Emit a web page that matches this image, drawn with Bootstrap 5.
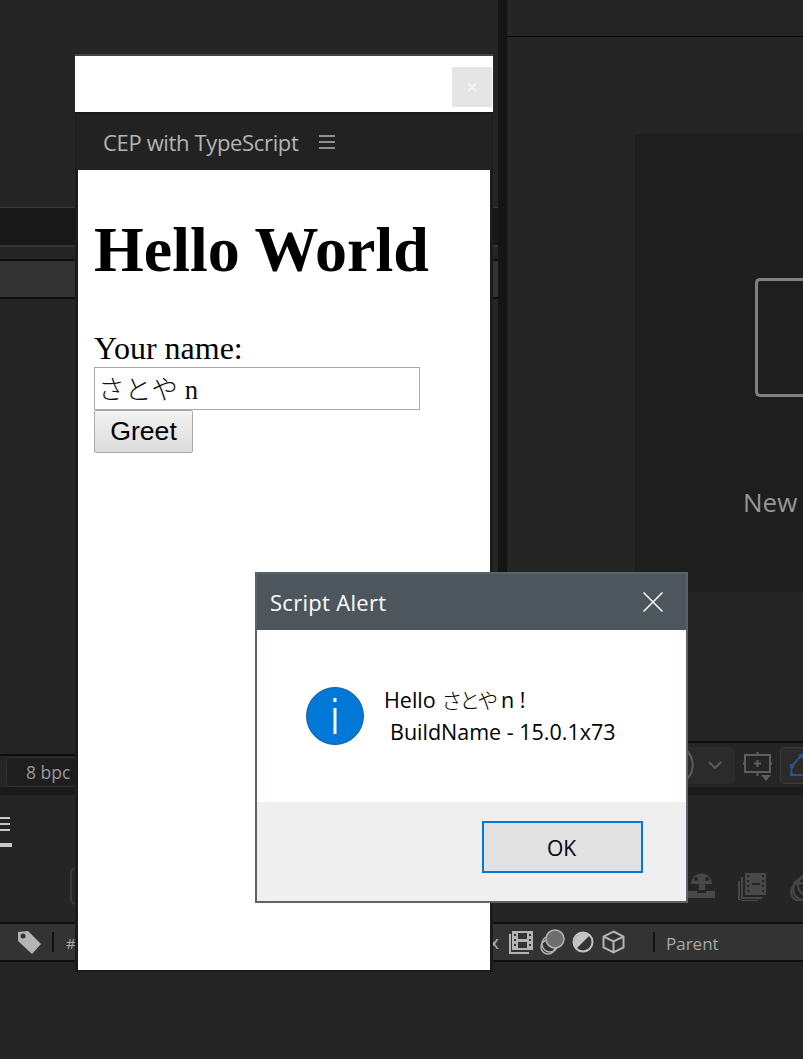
<!DOCTYPE html>
<html lang="en">
<head>
    <meta charset="UTF-8">
    <meta name="viewport" content="width=device-width, initial-scale=1.0">
    <title>CEP with TypeScript</title>
    <link href="https://cdn.jsdelivr.net/npm/bootstrap@5.3.0/dist/css/bootstrap.min.css" rel="stylesheet">
    <style>
        html, body { background: #252525; }
        .app-shell { width: 803px; height: 1059px; overflow: hidden; background: #252525; font-family: "Open Sans", "Noto Sans", sans-serif; }

        /* after effects behind the windows */
        .upper-area { height: 787px; }
        .left-dock { flex: 0 0 498px; padding-top: 207px; }
        .dock-tabs { height: 40px; background: #181818; border-top: 1px solid #3a3a3a; border-bottom: 2px solid #333; }
        .dock-strip { height: 40px; margin-top: 12px; background: #333; border-top: 2px solid #0e0e0e; border-bottom: 2px solid #0e0e0e; }
        .dock-split { flex: 0 0 9px; background: #141414; }
        .right-dock { flex: 0 0 296px; }
        .right-head { height: 37px; border-bottom: 1px solid #050505; }
        .comp-panel { height: 458px; margin: 97px 0 0 128px; background: #1e1e1e; padding: 144px 0 0 120px; }
        .comp-box { width: 80px; height: 119px; border: 3px solid #808080; border-right: 0; border-radius: 5px 0 0 5px; }
        .comp-label { margin: 87px 0 0 -12px; font-size: 26px; line-height: 36px; color: #959595; }

        .bpc-row { height: 33px; border-top: 2px solid #0e0e0e; color: #999; }
        .bpc-btn { flex: 0 0 72px; height: 30px; margin-left: 6px; padding-left: 19px; background: #1e1e1e; border: 1px solid #333; border-radius: 5px; font-size: 17.500px; line-height: 28px; white-space: nowrap; }
        .view-row { height: 46px; border-top: 2px solid #0e0e0e; }
        .view-btn { flex: 0 0 95px; height: 37px; margin-left: 133px; background: #2b2b2b; border-radius: 5px; padding-left: 46px; gap: 14px; }
        .crop-ico { margin: 3px 0 0 8px; }
        .mask-btn { flex: 0 0 30px; height: 37px; margin-left: 8px; padding-left: 9px; background: #2b2b2b; border: 1px solid #3c3c3c; border-radius: 5px 0 0 5px; }
        .tool-gap { height: 8px; background: #1a1a1a; }

        .tool-body { height: 127px; }
        .ham-ico { margin-top: 22px; }
        .find-btn { width: 40px; height: 38px; margin: 72px 0 0 58px; border: 2px solid #3a3a3a; border-radius: 6px; }
        .dim-ico { margin-top: 78px; }
        .dim-first { margin-left: 578px; }
        .dim-second { margin-left: 23px; }
        .dim-third { margin-left: 23px; }

        .layer-head { height: 40px; background: #333; border-top: 2px solid #0e0e0e; border-bottom: 2px solid #0e0e0e; color: #b4b4b4; }
        .tag-ico { margin-left: 17px; }
        .head-sep { width: 2px; height: 20px; background: #111; }
        .sep-a { margin-left: 10px; }
        .hash-label { margin: 3px 0 0 12px; font-size: 15px; width: 12px; color: #aaa; }
        .sw-x { margin: 0 0 0 411px; font-size: 19px; line-height: 20px; width: 14px; }
        .sw-ico { margin-left: 6px; }
        .sw-half { margin-left: 7px; }
        .sw-cube { margin-left: 8px; }
        .sep-b { margin-left: 28px; }
        .parent-label { margin: 4px 0 0 11px; font-size: 17px; color: #a8a8a8; }

        /* cep panel window */
        .cep-window { position: absolute; left: 75px; top: 54px; width: 418px; height: 918px; border-top: 2px solid #444; background: #1c1c1c; }
        .cep-title { height: 56px; background: #fff; padding: 11px 1px 0 0; }
        .cep-close { width: 40px; height: 40px; padding: 0; border: 0; background: #e5e5e5; color: #f6f6f6; font-size: 20px; line-height: 40px; font-family: "Liberation Sans", sans-serif; }
        .cep-nav { height: 58px; margin: 0 1px; padding: 0 0 0 27px; background: #222; border-top: 2px solid #1a1a1a; justify-content: flex-start; flex-wrap: nowrap; }
        .cep-brand { padding: 0; margin: 0 21px 0 0; font-size: 22px; line-height: 30px; color: #b4b4b4; font-family: "Open Sans", sans-serif; letter-spacing: -.35px; }
        .cep-brand:hover { color: #b4b4b4; }
        .cep-page { height: 800px; margin: 0 3px; background: #fff; padding: 0 16px; color: #000; font-family: "Liberation Serif", "Noto Sans CJK JP", serif; font-size: 32px; line-height: 37px; }
        .cep-page h1 { margin: 0; padding: 43px 0 43px; font-family: inherit; font-size: 64px; font-weight: 700; line-height: 74px; }
        .cep-page label { display: block; margin: 0; height: 37px; }
        .name-input { display: block; width: 326px; height: 43px; padding: 0 3px 3px; border: 1px solid #a9a9a9; border-radius: 0; background: #fff; color: #111; font-family: "Liberation Serif", "Noto Sans CJK JP", serif; font-size: 26.67px; font-weight: 300; line-height: 38px; }
        .greet-btn { display: block; width: 99px; height: 43px; padding: 0; border: 1px solid #a9a9a9; border-radius: 2px; background: linear-gradient(#f2f2f2, #dcdcdc); color: #000; font-family: "Liberation Sans", sans-serif; font-size: 26.67px; line-height: 39px; }

        /* alert dialog */
        .alert-window { position: absolute; left: 255px; top: 572px; width: 433px; height: 331px; border: 2px solid #5a6367; border-radius: 0; background: #fff; color: #000; }
        .alert-head { height: 56px; padding: 0 23px 0 13px; background: #4d565c; border: 0; border-radius: 0; color: #fff; font-size: 22px; letter-spacing: .3px; line-height: 56px; }
        .alert-head:first-child { border-radius: 0; }
        .alert-body { height: 172px; padding: 54px 0 0 49px; gap: 20px; }
        .alert-ico { margin-top: 3px; }
        .alert-text { font-size: 21.500px; line-height: 32px; white-space: nowrap; font-family: "Open Sans", "Noto Sans CJK JP", sans-serif; }
        .alert-second { display: block; padding-left: 6px; }
        .alert-cjk { font-size: 21px; font-weight: 300; line-height: 1; letter-spacing: -3px; }
        .alert-foot { height: 99px; padding: 19px 43px 0 0; background: #efefef; border: 0; border-radius: 0; }
        .alert-foot:last-child { border-radius: 0; }
        .ok-btn { width: 161px; height: 52px; padding: 1px 2px 0 0; background: #e1e1e1; border: 2px solid #0078d7; border-radius: 0; color: #000; font-size: 21px; line-height: 46px; font-family: "Open Sans", sans-serif; }
        .ok-btn:hover { background: #e1e1e1; border-color: #0078d7; color: #000; }
    </style>
</head>
<body>
    <div class="app-shell position-relative d-flex flex-column">
        <!-- Docks -->
        <div class="upper-area d-flex">
            <div class="left-dock d-flex flex-column">
                <div class="dock-tabs"></div>
                <div class="dock-strip"></div>
                <div class="bpc-row d-flex align-items-center mt-auto">
                    <div class="bpc-btn">8 bpc</div>
                </div>
            </div>
            <div class="dock-split"></div>
            <div class="right-dock d-flex flex-column">
                <div class="right-head"></div>
                <div class="comp-panel">
                    <div class="comp-box"></div>
                    <div class="comp-label">New</div>
                </div>
                <div class="view-row d-flex align-items-center mt-auto">
                    <div class="view-btn d-flex align-items-center">
                        <svg width="8" height="30" viewBox="0 0 8 30"><path d="M1 1a20 20 0 0 1 0 28" fill="none" stroke="#5c5c5c" stroke-width="2"/></svg>
                        <svg width="14" height="8" viewBox="0 0 14 8"><path d="M1 1l6 6 6-6" fill="none" stroke="#5c5c5c" stroke-width="2"/></svg>
                    </div>
                    <svg class="crop-ico flex-shrink-0" width="29" height="30" viewBox="0 0 29 30" fill="none" stroke="#5f5f5f" stroke-width="2"><path d="M2 3h25v17H2zM14.500 0v3M14.500 20v4M0 11.500h2M27 11.500h2M11 11.500h7M14.500 8v7"/><path d="M18 23h10l-5 6z" fill="#5f5f5f" stroke="none"/></svg>
                    <div class="mask-btn d-flex align-items-center">
                        <svg class="flex-shrink-0" width="20" height="26" viewBox="0 0 20 26" fill="none" stroke="#2b5487" stroke-width="2"><path d="M1 23l1-9 9-10M1 23h19"/><path d="M0 21h3v3H0zM0 12h4v4H0zM9 2h4v4H9z" fill="#2b5487" stroke="none"/></svg>
                    </div>
                </div>
            </div>
        </div>
        <div class="tool-gap"></div>

        <div class="tool-body d-flex align-items-start">
            <svg class="ham-ico flex-shrink-0" width="12" height="32" viewBox="0 0 12 32"><path d="M0 1h10M0 7h10M0 13h10" stroke="#c8c8c8" stroke-width="2"/><rect y="26" width="12" height="4" fill="#c8c8c8"/></svg>
            <div class="find-btn flex-shrink-0"></div>
            <svg class="dim-ico dim-first flex-shrink-0" width="27" height="25" viewBox="0 0 27 25" fill="#484848"><path d="M3 11a10.500 10.500 0 0 1 21 0h-7v6h-6v-6zM0 18h9v2h9v-2h9v7H0z"/><circle cx="8" cy="6" r="2" fill="#252525"/><circle cx="19" cy="6" r="2" fill="#252525"/></svg>
            <svg class="dim-ico dim-second flex-shrink-0" width="28" height="28" viewBox="0 0 28 28" fill="#484848"><path d="M7 0h21v22H7zM3 4h2v20h19v2H3zM0 8h2v18h1v2h17v-1H0z"/><path d="M14 10h8v2h-8zM9 2h2v2H9zM9 7h2v2H9zM9 12h2v2H9zM9 17h2v2H9zM24 2h2v2h-2zM24 7h2v2h-2zM24 12h2v2h-2zM24 17h2v2h-2z" fill="#252525"/></svg>
            <svg class="dim-ico dim-third flex-shrink-0" width="28" height="28" viewBox="0 0 28 28" fill="none" stroke="#484848" stroke-width="2"><circle cx="20" cy="12" r="11"/><circle cx="15" cy="16" r="11"/><circle cx="11" cy="19" r="9"/></svg>
        </div>

        <!-- Timeline header -->
        <div class="layer-head d-flex align-items-center">
            <svg class="tag-ico flex-shrink-0" width="25" height="25" viewBox="0 0 25 25"><path d="M1 2l10-1 13 13-9 10L1 11z" fill="#b4b4b4"/><circle cx="6" cy="6" r="2.500" fill="#333"/></svg>
            <div class="head-sep sep-a flex-shrink-0"></div>
            <div class="hash-label flex-shrink-0">#</div>
            <div class="sw-x flex-shrink-0">x</div>
            <svg class="sw-ico flex-shrink-0" width="24" height="23" viewBox="0 0 24 23" fill="#b4b4b4"><path d="M3 0h21v19H3zM0 3h2v18h18v2H0z"/><path d="M9 2h9v6H9zM9 11h9v6H9zM5 3h2v2H5zM5 8h2v2H5zM5 13h2v2H5zM20 3h2v2h-2zM20 8h2v2h-2zM20 13h2v2h-2z" fill="#333"/><path d="M10 9h7v2h-7z" fill="#b4b4b4"/></svg>
            <svg class="sw-ico flex-shrink-0" width="26" height="26" viewBox="0 0 26 26" fill="none" stroke="#b4b4b4" stroke-width="1.500"><circle cx="9" cy="18" r="7"/><circle cx="11" cy="15" r="8"/><circle cx="16" cy="10" r="9" fill="#6e6e6e"/></svg>
            <svg class="sw-half flex-shrink-0" width="22" height="22" viewBox="0 0 22 22"><circle cx="11" cy="11" r="9.500" fill="#333" stroke="#c4c4c4" stroke-width="2"/><path d="M4 18A10 10 0 0 1 18 4z" fill="#c4c4c4"/></svg>
            <svg class="sw-cube flex-shrink-0" width="23" height="24" viewBox="0 0 23 24" fill="none" stroke="#b4b4b4" stroke-width="2"><path d="M11.500 1.500l10 5v11l-10 5-10-5v-11zM1.500 6.500l10 5 10-5M11.500 11.500v11"/></svg>
            <div class="head-sep sep-b flex-shrink-0"></div>
            <div class="parent-label">Parent</div>
        </div>

        <!-- CEP panel -->
        <div class="cep-window">
            <div class="cep-title d-flex justify-content-end align-items-start">
                <button type="button" class="cep-close">×</button>
            </div>
            <nav class="navbar cep-nav align-items-center">
                <a class="navbar-brand cep-brand" href="#">CEP with TypeScript</a>
                <svg width="16" height="14" viewBox="0 0 16 14"><path d="M0 1h16M0 7h16M0 13h16" stroke="#b4b4b4" stroke-width="1.600"/></svg>
            </nav>
            <div class="cep-page">
                <h1>Hello World</h1>
                <label for="nameField">Your name:</label>
                <input id="nameField" class="name-input" type="text" value="さとや n">
                <button type="button" class="greet-btn">Greet</button>
            </div>
        </div>

        <!-- Script alert -->
        <div class="card alert-window">
            <div class="card-header alert-head d-flex justify-content-between align-items-center">
                <span>Script Alert</span>
                <svg width="20" height="20" viewBox="0 0 20 20"><path d="M.5.5l19 19M19.500.5l-19 19" stroke="#fff" stroke-width="1.500"/></svg>
            </div>
            <div class="card-body alert-body d-flex align-items-start flex-grow-0">
                <svg class="flex-shrink-0 alert-ico" width="58" height="58" viewBox="0 0 58 58"><circle cx="29" cy="29" r="28.500" fill="#0078d7" stroke="#1c5f99"/><path d="M27.500 11h3v4h-3zM27.500 21h3v26h-3z" fill="#fff"/></svg>
                <div class="alert-text">Hello <span class="alert-cjk">さとや</span> n !<span class="alert-second">BuildName - 15.0.1x73</span></div>
            </div>
            <div class="card-footer alert-foot d-flex justify-content-end align-items-start">
                <button type="button" class="btn ok-btn">OK</button>
            </div>
        </div>
    </div>

    <script src="https://cdn.jsdelivr.net/npm/bootstrap@5.3.0/dist/js/bootstrap.bundle.min.js"></script>
</body>
</html>
